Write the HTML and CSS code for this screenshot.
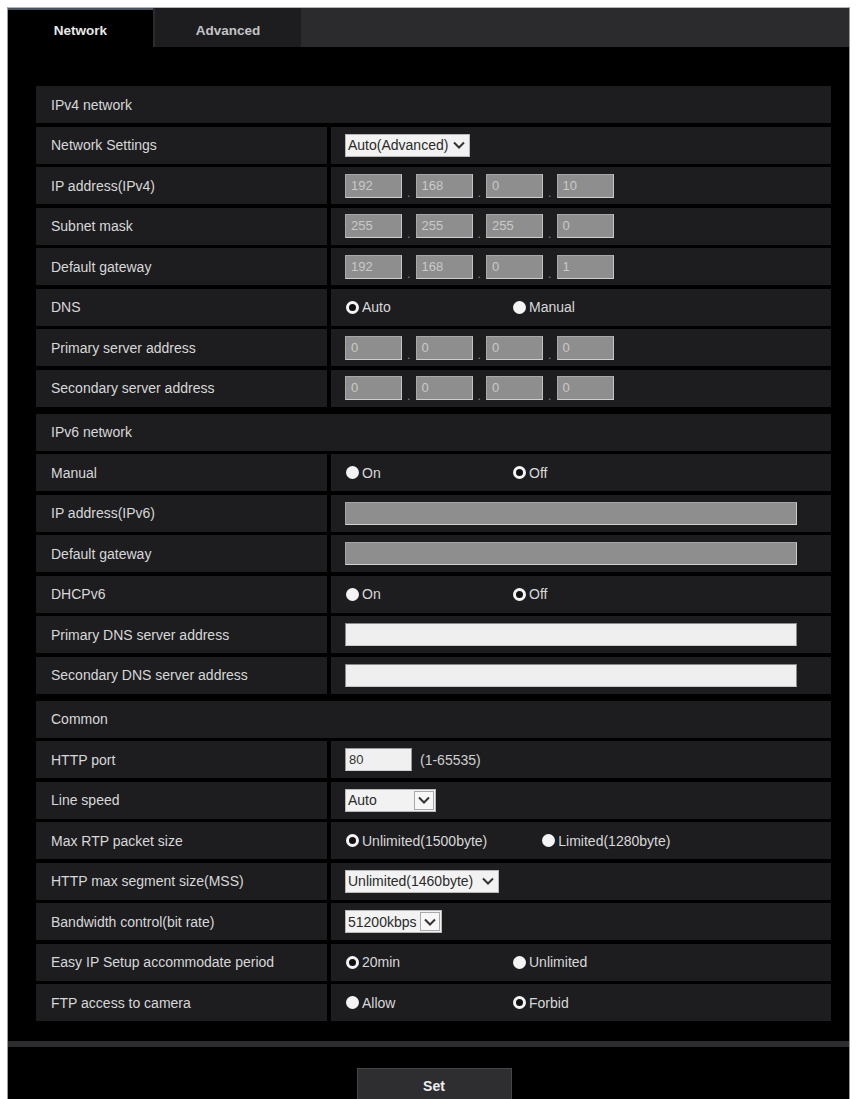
FILE: index.html
```html
<!DOCTYPE html>
<html>
<head>
<meta charset="utf-8">
<link rel="stylesheet" href="styles.css">
</head>
<body>
<div class="frame">
  <div class="tabs">
    <div class="tab active">Network</div>
    <div class="tab">Advanced</div>
  </div>
  <div class="content">
    <div class="section">
      <div class="row head"><div class="cell">IPv4 network</div></div>
      <div class="row">
        <div class="cell label">Network Settings</div>
        <div class="cell value">
          <div class="select w-ns"><span class="sel-text">Auto(Advanced)</span><span class="chev"><svg width="14" height="10" viewBox="0 0 14 10"><path d="M2 2.5 L7 7.5 L12 2.5" fill="none" stroke="#333" stroke-width="2"/></svg></span></div>
        </div>
      </div>
      <div class="row">
        <div class="cell label">IP address(IPv4)</div>
        <div class="cell value ip"><span class="oct">192</span><span class="dot">.</span><span class="oct">168</span><span class="dot">.</span><span class="oct">0</span><span class="dot">.</span><span class="oct">10</span></div>
      </div>
      <div class="row">
        <div class="cell label">Subnet mask</div>
        <div class="cell value ip"><span class="oct">255</span><span class="dot">.</span><span class="oct">255</span><span class="dot">.</span><span class="oct">255</span><span class="dot">.</span><span class="oct">0</span></div>
      </div>
      <div class="row">
        <div class="cell label">Default gateway</div>
        <div class="cell value ip"><span class="oct">192</span><span class="dot">.</span><span class="oct">168</span><span class="dot">.</span><span class="oct">0</span><span class="dot">.</span><span class="oct">1</span></div>
      </div>
      <div class="row">
        <div class="cell label">DNS</div>
        <div class="cell value"><span class="opt"><span class="radio on"></span>Auto</span><span class="opt"><span class="radio"></span>Manual</span></div>
      </div>
      <div class="row">
        <div class="cell label">Primary server address</div>
        <div class="cell value ip"><span class="oct">0</span><span class="dot">.</span><span class="oct">0</span><span class="dot">.</span><span class="oct">0</span><span class="dot">.</span><span class="oct">0</span></div>
      </div>
      <div class="row">
        <div class="cell label">Secondary server address</div>
        <div class="cell value ip"><span class="oct">0</span><span class="dot">.</span><span class="oct">0</span><span class="dot">.</span><span class="oct">0</span><span class="dot">.</span><span class="oct">0</span></div>
      </div>
    </div>

    <div class="section">
      <div class="row head"><div class="cell">IPv6 network</div></div>
      <div class="row">
        <div class="cell label">Manual</div>
        <div class="cell value"><span class="opt"><span class="radio"></span>On</span><span class="opt"><span class="radio on"></span>Off</span></div>
      </div>
      <div class="row">
        <div class="cell label">IP address(IPv6)</div>
        <div class="cell value"><span class="field gray"></span></div>
      </div>
      <div class="row">
        <div class="cell label">Default gateway</div>
        <div class="cell value"><span class="field gray"></span></div>
      </div>
      <div class="row">
        <div class="cell label">DHCPv6</div>
        <div class="cell value"><span class="opt"><span class="radio"></span>On</span><span class="opt"><span class="radio on"></span>Off</span></div>
      </div>
      <div class="row">
        <div class="cell label">Primary DNS server address</div>
        <div class="cell value"><span class="field light"></span></div>
      </div>
      <div class="row">
        <div class="cell label">Secondary DNS server address</div>
        <div class="cell value"><span class="field light"></span></div>
      </div>
    </div>

    <div class="section">
      <div class="row head"><div class="cell">Common</div></div>
      <div class="row">
        <div class="cell label">HTTP port</div>
        <div class="cell value"><span class="port">80</span><span class="hint">(1-65535)</span></div>
      </div>
      <div class="row">
        <div class="cell label">Line speed</div>
        <div class="cell value">
          <div class="select w-ls"><span class="sel-text">Auto</span><span class="chev boxed"><svg width="14" height="10" viewBox="0 0 14 10"><path d="M2 2.5 L7 7.5 L12 2.5" fill="none" stroke="#333" stroke-width="2"/></svg></span></div>
        </div>
      </div>
      <div class="row">
        <div class="cell label">Max RTP packet size</div>
        <div class="cell value"><span class="opt wide"><span class="radio on"></span>Unlimited(1500byte)</span><span class="opt"><span class="radio"></span>Limited(1280byte)</span></div>
      </div>
      <div class="row">
        <div class="cell label">HTTP max segment size(MSS)</div>
        <div class="cell value">
          <div class="select w-mss"><span class="sel-text">Unlimited(1460byte)</span><span class="chev"><svg width="14" height="10" viewBox="0 0 14 10"><path d="M2 2.5 L7 7.5 L12 2.5" fill="none" stroke="#333" stroke-width="2"/></svg></span></div>
        </div>
      </div>
      <div class="row">
        <div class="cell label">Bandwidth control(bit rate)</div>
        <div class="cell value">
          <div class="select w-bw"><span class="sel-text">51200kbps</span><span class="chev boxed"><svg width="14" height="10" viewBox="0 0 14 10"><path d="M2 2.5 L7 7.5 L12 2.5" fill="none" stroke="#333" stroke-width="2"/></svg></span></div>
        </div>
      </div>
      <div class="row">
        <div class="cell label">Easy IP Setup accommodate period</div>
        <div class="cell value"><span class="opt"><span class="radio on"></span>20min</span><span class="opt"><span class="radio"></span>Unlimited</span></div>
      </div>
      <div class="row">
        <div class="cell label">FTP access to camera</div>
        <div class="cell value"><span class="opt"><span class="radio"></span>Allow</span><span class="opt"><span class="radio on"></span>Forbid</span></div>
      </div>
    </div>
  </div>
  <div class="sep"></div>
  <div class="actions"><button class="set" type="button">Set</button></div>
</div>
</body>
</html>
```

FILE: styles.css
```css
html, body {
  margin: 0;
  padding: 0;
  background: #ffffff;
}

body {
  font-family: "Liberation Sans", Arial, sans-serif;
  font-size: 14px;
  color: #dcdcdc;
}

.frame {
  margin: 7px 6px 0 7px;
  background: #000000;
  border-top: 1px solid #b5b5b5;
  border-left: 1px solid #9a9a9a;
  border-right: 1px solid #9a9a9a;
  min-height: 1120px;
}

.tabs {
  display: flex;
  height: 39px;
  background: #2b2b2e;
}

.tab {
  width: 146px;
  box-sizing: border-box;
  padding-top: 15px;
  text-align: center;
  font-weight: bold;
  font-size: 13.5px;
  color: #c4c4c4;
  background: #1d1d20;
  margin-left: 2px;
}

.tab.active {
  width: 145px;
  margin-left: 0;
  background: #000000;
  color: #e8e8e8;
  border-top: 2px solid #4a5561;
  padding-top: 13px;
}

.content {
  display: flex;
  flex-direction: column;
  gap: 7px;
  padding: 39px 18px 20px 28px;
}

.section {
  display: flex;
  flex-direction: column;
  gap: 3.5px;
}

.row {
  display: grid;
  grid-template-columns: 291px 1fr;
  column-gap: 4px;
  height: 37px;
}

.row.head {
  grid-template-columns: 1fr;
}

.cell {
  background: #1d1d20;
  display: flex;
  align-items: center;
  padding-left: 15px;
  color: #d8d8d8;
  white-space: nowrap;
}

.cell.value {
  padding-left: 14px;
}

/* IP octet boxes */
.ip {
  gap: 0;
}

.oct {
  width: 57px;
  height: 24px;
  box-sizing: border-box;
  background: #8e8e8e;
  border: 1px solid #a8a8a8;
  border-bottom-color: #cfcfcf;
  border-right-color: #c4c4c4;
  color: #c9c9c9;
  font-size: 13px;
  line-height: 22px;
  padding-left: 5px;
}

.dot {
  width: 13.5px;
  text-align: center;
  align-self: flex-end;
  color: #8a8a8a;
  font-size: 12px;
  line-height: 14px;
  padding-bottom: 4px;
}

/* Radios */
.opt {
  display: inline-flex;
  align-items: center;
  min-width: 167px;
  color: #d8d8d8;
}

.opt.wide {
  min-width: 0;
  margin-right: 54px;
}

.radio {
  width: 13px;
  height: 13px;
  box-sizing: border-box;
  border-radius: 50%;
  background: #f4f4f4;
  margin-right: 3px;
  margin-left: 1px;
}

.radio.on {
  background: #111111;
  border: 3.5px solid #f4f4f4;
}

/* Full-width fields */
.field {
  width: 452px;
  height: 23px;
  box-sizing: border-box;
}

.field.gray {
  background: #8e8e8e;
  border: 1px solid #a5a5a5;
  border-bottom-color: #d2d2d2;
  border-right-color: #c8c8c8;
}

.field.light {
  background: #efefef;
  border: 1px solid #8a8a8a;
  border-bottom-color: #c8c8c8;
}

/* Selects */
.select {
  display: flex;
  align-items: center;
  height: 23px;
  box-sizing: border-box;
  background: #f2f2f2;
  border: 1px solid #b8b8b8;
  color: #2a2a2a;
  font-size: 14px;
}

.sel-text {
  flex: 1;
  padding-left: 2px;
  overflow: hidden;
}

.chev {
  width: 20px;
  height: 21px;
  display: flex;
  align-items: center;
  justify-content: center;
}

.chev.boxed {
  box-sizing: border-box;
  border: 1px solid #a9a9a9;
  background: #f7f7f7;
  height: 19px;
  margin-right: 1px;
}

.w-ns { width: 125px; }
.w-ls { width: 91px; }
.w-mss { width: 154px; }
.w-bw { width: 97px; }

/* HTTP port */
.port {
  width: 67px;
  height: 23px;
  box-sizing: border-box;
  background: #f0f0f0;
  border: 1px solid #9a9a9a;
  border-bottom-color: #cfcfcf;
  color: #333;
  font-size: 13px;
  line-height: 21px;
  padding-left: 3px;
}

.hint {
  margin-left: 8px;
  color: #cfcfcf;
}

/* Bottom */
.sep {
  height: 6px;
  background: #2d2d2f;
}

.actions {
  display: flex;
  justify-content: center;
  padding-top: 21px;
  padding-left: 11px;
}

.set {
  width: 155px;
  height: 36px;
  background: #2e2e30;
  border: 1px solid #464648;
  color: #eeeeee;
  font-family: "Liberation Sans", Arial, sans-serif;
  font-weight: bold;
  font-size: 14px;
  padding: 0;
}
```
